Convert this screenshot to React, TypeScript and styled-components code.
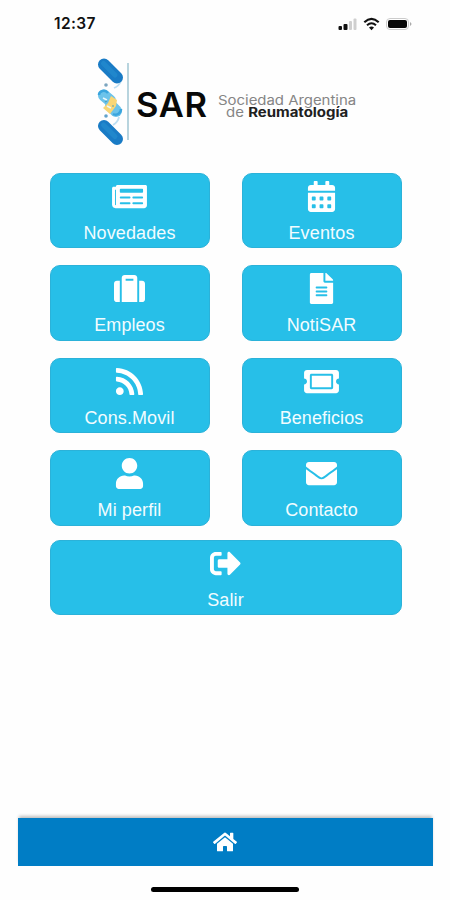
import React from "react";
import styled, { createGlobalStyle } from "styled-components";
import type { IconType } from "react-icons";
import {
  FaNewspaper, FaCalendarAlt, FaSuitcase, FaFileAlt, FaRss, FaTicketAlt,
  FaUser, FaEnvelope, FaSignOutAlt, FaHome,
} from "react-icons/fa";

const GlobalStyle = createGlobalStyle`
  *{box-sizing:border-box}
  body{margin:0;background:#fefefe}
`;

const Screen = styled.div`
  width: 450px;
  height: 900px;
  overflow: hidden;
  display: flex;
  flex-direction: column;
  background: #fefefe;
  font-family: "Liberation Sans", Arial, sans-serif;
`;

const StatusBar = styled.header`
  height: 46px;
  padding: 1px 38px 0 54px;
  display: flex;
  align-items: center;
  justify-content: space-between;
`;

const Clock = styled.span`
  font: 600 15.5px/20px Inter, sans-serif;
  letter-spacing: 0.4px;
  color: #111;
`;

const Brand = styled.div`
  height: 126.5px;
  padding: 11px 0 0 94px;
  display: flex;
  align-items: flex-start;
`;

const BrandName = styled.div`
  width: 82px;
  margin: 27px 0 0 2px;
  font: 600 34.5px/42px Inter, sans-serif;
  letter-spacing: 0.7px;
  color: #080808;
`;

const Tagline = styled.div`
  width: 138px;
  margin-top: 37px;
  display: flex;
  flex-direction: column;
  font: 400 13px/12px Inter, sans-serif;
  color: #858585;
  white-space: nowrap;
  transform: scaleX(1.15);
  transform-origin: left;
`;

const TaglineTop = styled.span`
  letter-spacing: -0.02px;
`;

const TaglineBottom = styled.span`
  padding-left: 7px;
  b {
    font-weight: 700;
    color: #202020;
  }
`;

const Menu = styled.main`
  width: 352px;
  margin-left: 50px;
  display: grid;
  grid-template-columns: 160px 160px;
  grid-template-rows: repeat(4, 75.5px) 75.5px;
  column-gap: 32px;
  row-gap: 17px;
`;

const Tile = styled.button<{ $wide?: boolean }>`
  grid-column: ${(p) => (p.$wide ? "1 / -1" : "auto")};
  margin: ${(p) => (p.$wide ? "-3px 0 3px" : "0")};
  padding: 7px 1px 0 0;
  border: 1px solid #2bb2d9;
  border-radius: 10px;
  background: #27bfe8;
  color: #fff;
  display: flex;
  flex-direction: column;
  align-items: center;
  font: 18px/22px "Liberation Sans", Arial, sans-serif;
`;

const IconSlot = styled.span<{ $width: number }>`
  height: 31px;
  margin-bottom: 10px;
  display: flex;
  align-items: center;
  svg {
    height: 31px;
    width: ${(p) => p.$width}px;
  }
`;

const Label = styled.span<{ $spacing: number }>`
  letter-spacing: ${(p) => p.$spacing}px;
  color: #f2fcff;
`;

const Footer = styled.footer`
  margin-top: auto;
  height: 82px;
  display: flex;
  flex-direction: column;
  align-items: center;
`;

const NavBar = styled.nav`
  width: 415px;
  height: 48px;
  display: flex;
  align-items: center;
  justify-content: center;
  background: #007dc5;
  color: #fff;
  box-shadow: 0 -3px 3px -1px rgba(0, 0, 0, 0.25);
`;

const HomeIndicator = styled.div`
  width: 148px;
  height: 5px;
  margin-top: 21px;
  border-radius: 3px;
  background: #000;
`;

const StatusIcons = () => (
  <svg width="74" height="16" viewBox="0 0 74 16">
    <rect x="0.5" y="10" width="3.5" height="4" rx="1" fill="#111" />
    <rect x="5.5" y="8" width="4" height="6" rx="1" fill="#111" />
    <rect x="11" y="5" width="3" height="9" rx="1" fill="#cfcfcf" />
    <rect x="15.5" y="2.5" width="3" height="11.5" rx="1" fill="#cfcfcf" />
    <path d="M26.3 6.2Q33.5-.3 40.7 6.2" fill="none" stroke="#111" strokeWidth="2.2" />
    <path d="M29 9.2q4.5-4 9 0" fill="none" stroke="#111" strokeWidth="2" />
    <path d="M33.5 14.2l-2.5-2.8q2.5-2 5 0z" fill="#111" />
    <rect x="48.5" y="2.5" width="22" height="11" rx="3.5" fill="#fff" stroke="#ccc" />
    <rect x="50" y="4" width="19" height="8" rx="2" fill="#080808" />
    <path d="M72 6q3 2 0 4z" fill="#aaa" />
  </svg>
);

const Helix = () => (
  <svg width="40" height="92" viewBox="94 57 40 92">
    <path d="M121 81q-2 5-7 7M119 117q-1 5-6 8" stroke="#bddff3" strokeWidth="1.8" fill="none" />
    <path d="M104 64.5l13 13M104 126l13 13" stroke="#197bc5" strokeWidth="12" strokeLinecap="round" />
    <path d="M103.5 63.5l11.5 11.5M103.5 125l11.5 11.5" stroke="#2087cc" strokeWidth="5" strokeLinecap="round" />
    <path d="M104 95.5l6 5" stroke="#6cc3ea" strokeWidth="12" strokeLinecap="round" />
    <path d="M111 106l5 5" stroke="#6cc3ea" strokeWidth="12" strokeLinecap="round" />
    <path d="M111 96l6 4-1 6-6 8-7-6 5-5z" fill="#f9d675" />
    <path d="M99 95c0-4 6-6 9-2M121 109c0 4-4 7-8 5" stroke="#3aa5de" strokeWidth="2.5" fill="none" />
    <path d="M103 98l4 2M107 106l4 2" stroke="#e9f8fd" strokeWidth="1.5" />
    <path d="M105 102l2-1M112 106l2 0" stroke="#4d9dba" strokeWidth="1.2" />
    <circle cx="106" cy="85" r="1.8" fill="#7ca5bf" />
    <circle cx="106" cy="116" r="1.8" fill="#62a3cb" />
    <path d="M128 63v77" stroke="#91bdcd" strokeWidth="1.3" />
  </svg>
);

interface MenuItem {
  label: string;
  icon: IconType;
  iconWidth: number;
  spacing: number;
  wide?: boolean;
}

const items: MenuItem[] = [
  { label: "Novedades", icon: FaNewspaper, iconWidth: 35, spacing: 0.1 },
  { label: "Eventos", icon: FaCalendarAlt, iconWidth: 31, spacing: 0.15 },
  { label: "Empleos", icon: FaSuitcase, iconWidth: 31, spacing: 0.05 },
  { label: "NotiSAR", icon: FaFileAlt, iconWidth: 31, spacing: 0.1 },
  { label: "Cons.Movil", icon: FaRss, iconWidth: 31, spacing: 0.1 },
  { label: "Beneficios", icon: FaTicketAlt, iconWidth: 35, spacing: 0.05 },
  { label: "Mi perfil", icon: FaUser, iconWidth: 31, spacing: 0.1 },
  { label: "Contacto", icon: FaEnvelope, iconWidth: 31, spacing: 0.05 },
  { label: "Salir", icon: FaSignOutAlt, iconWidth: 31, spacing: 0.1, wide: true },
];

export default function App() {
  return (
    <>
      <GlobalStyle />
      <Screen>
        <StatusBar>
          <Clock>12:37</Clock>
          <StatusIcons />
        </StatusBar>
        <Brand>
          <Helix />
          <BrandName>SAR</BrandName>
          <Tagline>
            <TaglineTop>Sociedad Argentina</TaglineTop>
            <TaglineBottom>de <b>Reumatología</b></TaglineBottom>
          </Tagline>
        </Brand>
        <Menu>
          {items.map(({ label, icon: Icon, iconWidth, spacing, wide }) => (
            <Tile key={label} $wide={wide}>
              <IconSlot $width={iconWidth}><Icon /></IconSlot>
              <Label $spacing={spacing}>{label}</Label>
            </Tile>
          ))}
        </Menu>
        <Footer>
          <NavBar><FaHome size={24} /></NavBar>
          <HomeIndicator />
        </Footer>
      </Screen>
    </>
  );
}
